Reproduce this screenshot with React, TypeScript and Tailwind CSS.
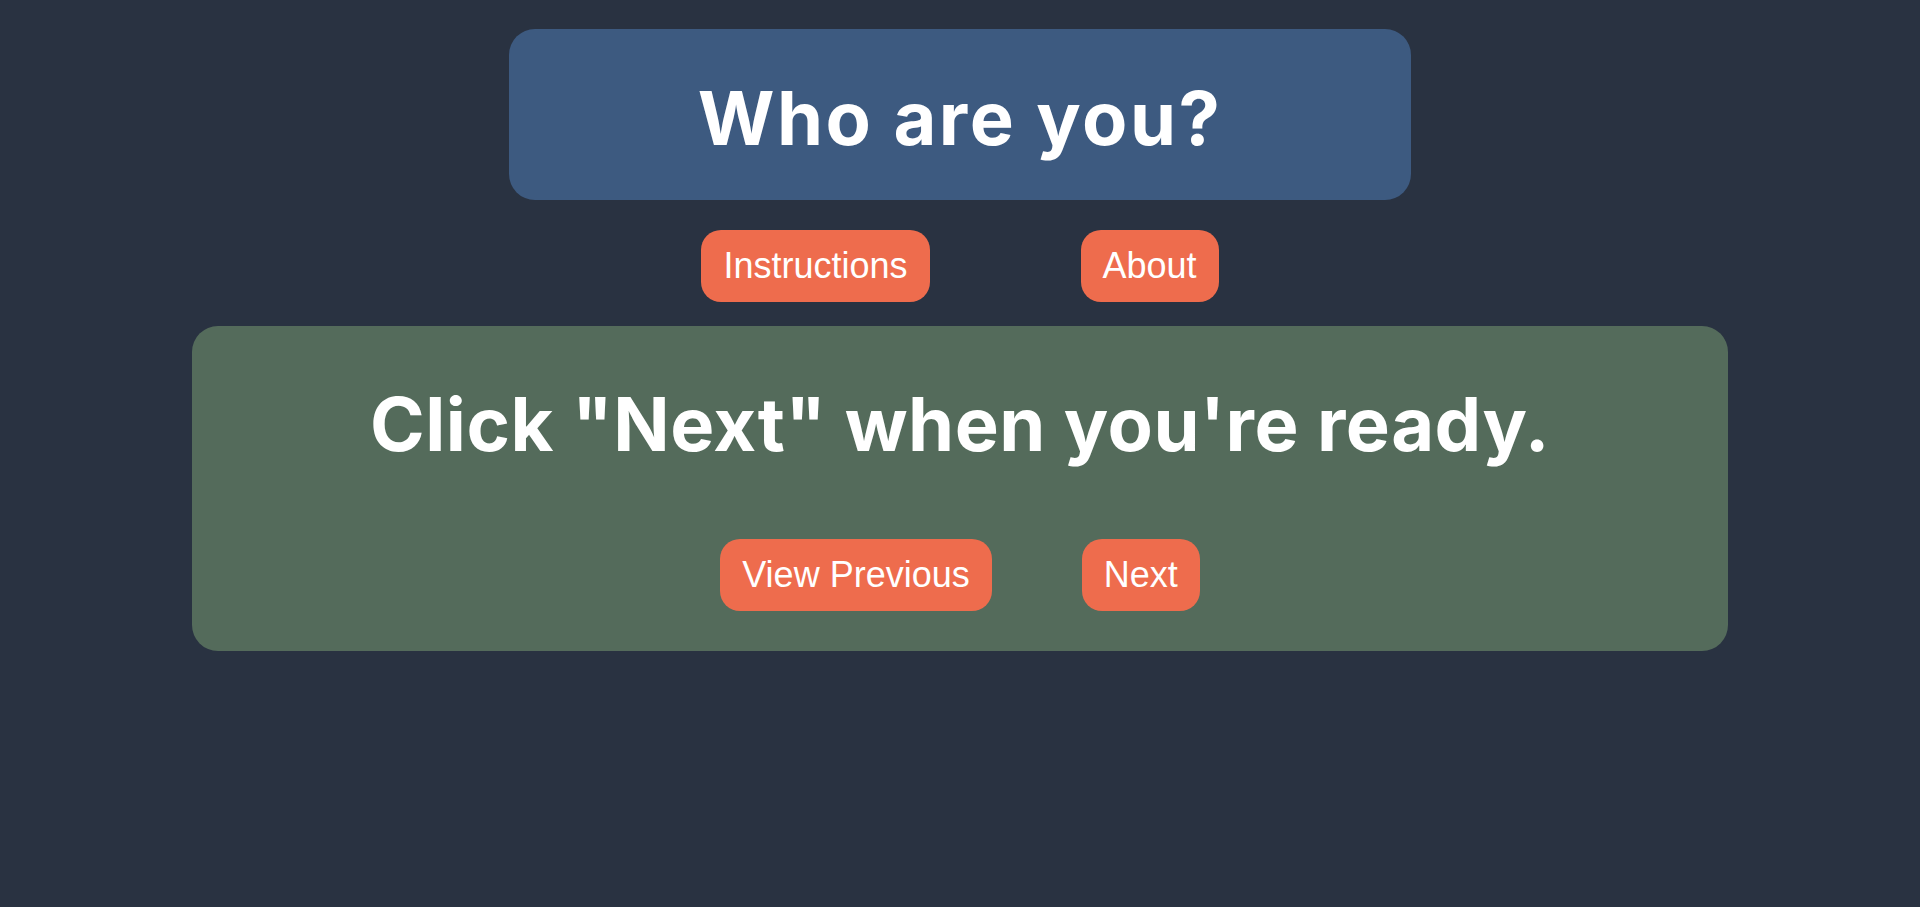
import React from "react";

function OrangeButton({ label }: { label: string }) {
  return (
    <button className="h-[72px] px-[22px] rounded-[20px] bg-[#ee6c4d] text-white text-[36px] leading-none font-['Liberation_Sans',Arial,sans-serif] cursor-pointer">
      {label}
    </button>
  );
}

export default function App() {
  return (
    <div className="min-h-[907px] w-full bg-[#293241] flex flex-col items-center">
      <div className="mt-[29px] w-[902px] h-[171px] rounded-[26px] bg-[#3d5a80] flex items-center justify-center pt-[6px]">
        <h1 className="text-white text-[74px] leading-none font-bold font-['Inter',sans-serif] tracking-[2.5px]">
          Who are you?
        </h1>
      </div>

      <div className="mt-[30px] flex gap-[151px]">
        <OrangeButton label="Instructions" />
        <OrangeButton label="About" />
      </div>

      <div className="mt-[24px] w-[1536px] h-[325px] rounded-[26px] bg-[#546b5b] flex flex-col items-center pt-[48px]">
        <div className="h-[100px] flex items-center">
          <h2 className="text-white text-[74px] leading-none font-bold font-['Inter',sans-serif] tracking-[0.5px]">
            Click "Next" when you're ready.
          </h2>
        </div>
        <div className="mt-[65px] flex gap-[90px]">
          <OrangeButton label="View Previous" />
          <OrangeButton label="Next" />
        </div>
      </div>
    </div>
  );
}
